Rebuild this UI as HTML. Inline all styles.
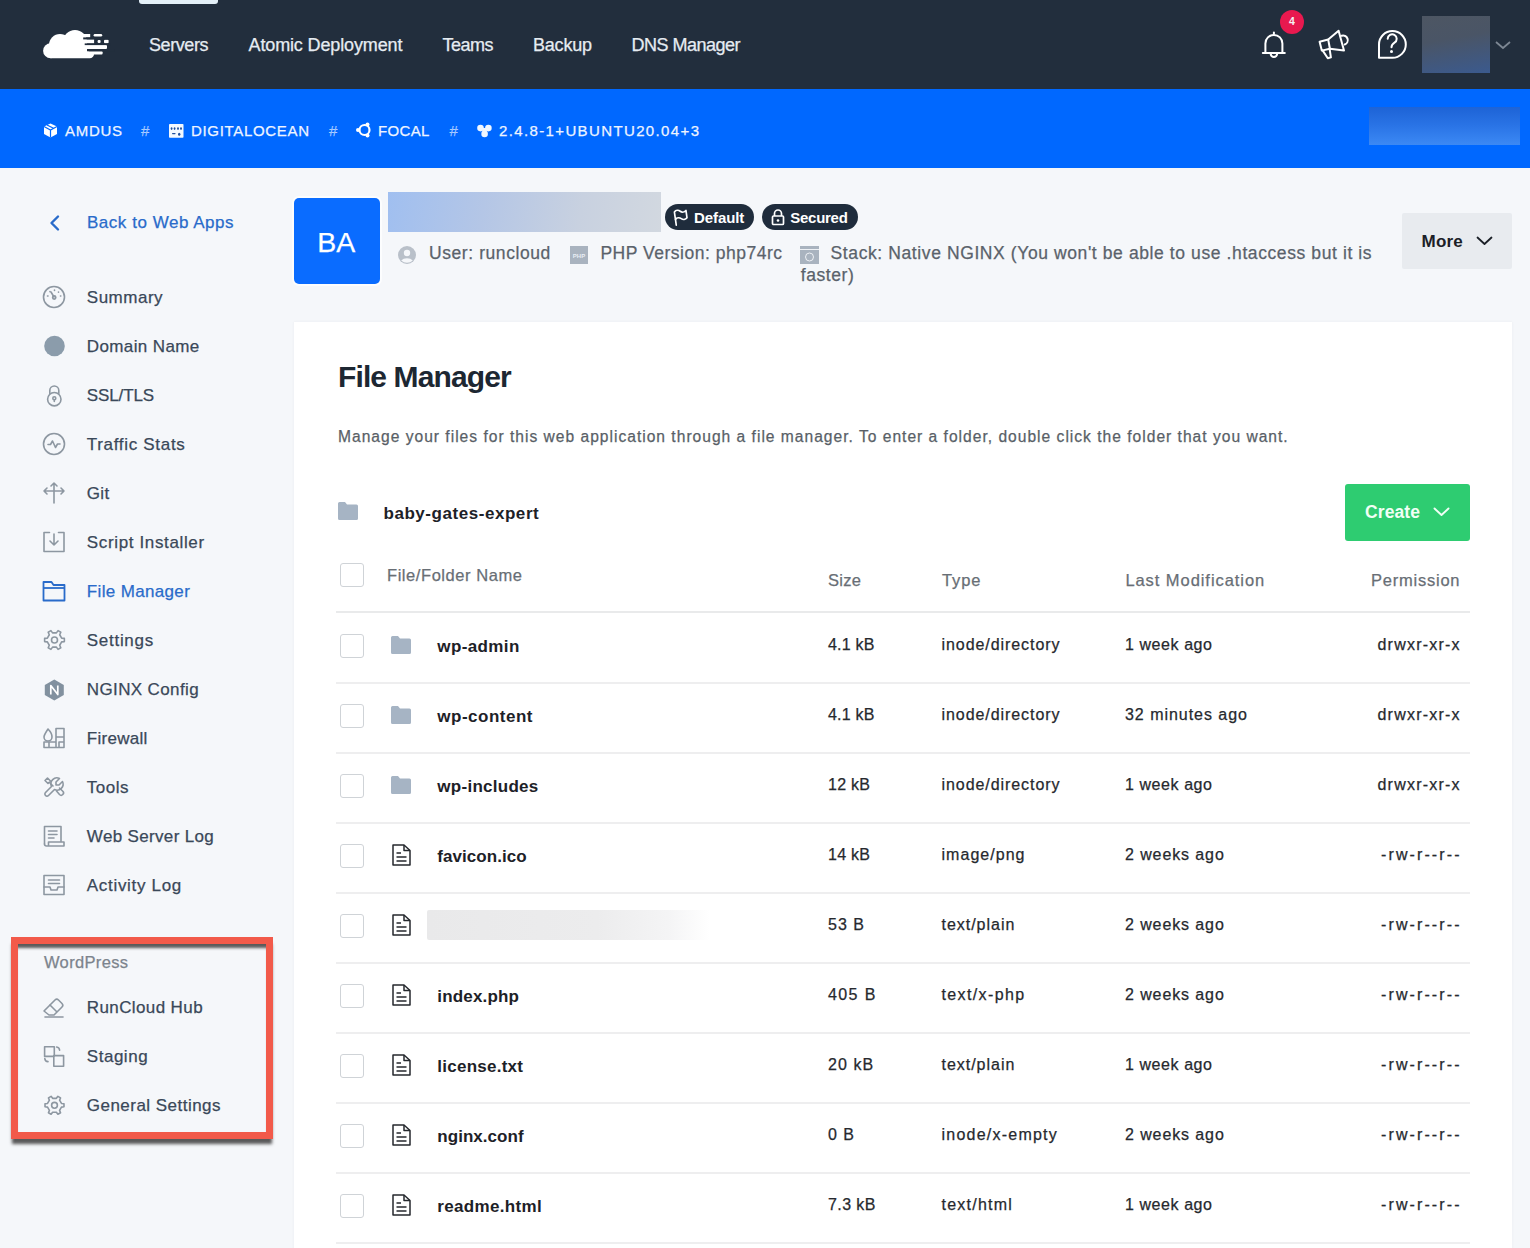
<!DOCTYPE html>
<html><head><meta charset="utf-8"><style>
html,body{margin:0;padding:0;}
body{width:1530px;height:1248px;position:relative;overflow:hidden;background:#f5f7fa;font-family:"Liberation Sans",sans-serif;}
.t{position:absolute;white-space:nowrap;line-height:1;-webkit-text-stroke:0.25px currentColor;}
svg{overflow:visible}
</style></head><body>
<div style="position:absolute;left:0px;top:0px;width:1530px;height:89px;background:#222e3d"></div>
<div style="position:absolute;left:139px;top:-4px;width:79px;height:8px;background:#e4f0f8;border-radius:3px"></div>
<svg style="position:absolute;left:43px;top:29px;" width="66" height="31" viewBox="0 0 66 31">
<g fill="#fff">
<circle cx="7.6" cy="21.8" r="7.5"/>
<circle cx="17" cy="16" r="11"/>
<circle cx="32" cy="13" r="12"/>
<path d="M7.6 14 H44 V25 H51 a4.3 4.3 0 0 1 -4.3 4.3 H7.6 Z"/>
<rect x="38" y="5" width="9.2" height="3.4"/>
<rect x="50.6" y="4.9" width="8.6" height="2.6" rx="1.3"/>
<rect x="38" y="10.4" width="13.1" height="4"/>
<rect x="54.6" y="11" width="3" height="3" rx="1"/>
<rect x="61" y="10.8" width="4.6" height="3.4" rx="1"/>
<rect x="38" y="16.1" width="26" height="3.9" rx="1"/>
<rect x="38" y="22.3" width="21.6" height="3.2" rx="1"/>
</g>
<g fill="#222e3d">
<rect x="40.2" y="8.4" width="26" height="2"/>
<rect x="41.7" y="14.4" width="26" height="1.7"/>
<rect x="45.7" y="20" width="26" height="2.3"/>
</g>
</svg>
<div class="t" style="left:149.00px;top:35.76px;font-size:18px;color:#e6ecf2;font-weight:normal;letter-spacing:-0.418px;">Servers</div>
<div class="t" style="left:248.50px;top:35.76px;font-size:18px;color:#e6ecf2;font-weight:normal;letter-spacing:-0.129px;">Atomic Deployment</div>
<div class="t" style="left:442.50px;top:35.76px;font-size:18px;color:#e6ecf2;font-weight:normal;letter-spacing:-0.502px;">Teams</div>
<div class="t" style="left:533.00px;top:35.76px;font-size:18px;color:#e6ecf2;font-weight:normal;letter-spacing:-0.206px;">Backup</div>
<div class="t" style="left:631.50px;top:35.76px;font-size:18px;color:#e6ecf2;font-weight:normal;letter-spacing:-0.505px;">DNS Manager</div>
<svg style="position:absolute;left:1260px;top:30px;" width="28" height="31" viewBox="0 0 28 31"><g fill="none" stroke="#fff" stroke-width="2" stroke-linecap="round" stroke-linejoin="round"><path d="M13.9 2.6 v1.2"/><path d="M5.4 22.6 V13.4 a8.5 8.5 0 0 1 17 0 V22.6"/><path d="M2.8 22.9 H24.8"/><path d="M10.6 23.6 a3.3 3.3 0 0 0 6.6 0"/></g></svg>
<div style="position:absolute;left:1280px;top:10px;width:24px;height:24px;background:#e8194f;border-radius:50%"></div>
<div class="t" style="left:1289.00px;top:15.71px;font-size:10.5px;color:#f4f4f4;font-weight:bold;letter-spacing:0.000px;-webkit-text-stroke:0;">4</div>
<svg style="position:absolute;left:1316px;top:28px;" width="34" height="34" viewBox="0 0 34 34"><g fill="none" stroke="#fff" stroke-width="2" stroke-linejoin="round" stroke-linecap="round"><path d="M3.6 13.8 L12.2 11.5 L22.6 2.7 L28 22.6 L13.9 20.7 L5.8 22.6 Z"/><path d="M12.2 11.5 L13.9 20.7"/><path d="M6.6 22.4 L11.8 30.3 L14.9 29.3 L13.6 20.8"/><path d="M25.6 7.8 A4.6 4.6 0 0 1 28.7 16.5"/></g></svg>
<svg style="position:absolute;left:1376px;top:28px;" width="33" height="33" viewBox="0 0 33 33"><g fill="none" stroke="#fff" stroke-width="2" stroke-linejoin="round" stroke-linecap="round"><path d="M3 29.8 V16.4 A13.4 13.4 0 1 1 16.4 29.8 Z"/><path d="M11.7 10.8 a4.5 4.5 0 1 1 6.8 3.9 c-1.6 1 -3 1.9 -3 4.6"/></g><circle cx="15.5" cy="23.6" r="1.5" fill="#fff"/></svg>
<div style="position:absolute;left:1422px;top:16px;width:68px;height:57px;background:linear-gradient(170deg,#4d5663 0%,#4a5566 40%,#3b5a8e 100%)"></div>
<svg style="position:absolute;left:1494px;top:39px;" width="18" height="12" viewBox="0 0 18 12"><path d="M2 3 L9 9 L16 3" fill="none" stroke="#7d8793" stroke-width="1.8"/></svg>
<div style="position:absolute;left:0px;top:89px;width:1530px;height:79px;background:#0068ff"></div>
<div class="t" style="left:65.00px;top:122.50px;font-size:15px;color:#eef4ff;font-weight:normal;letter-spacing:0.709px;">AMDUS</div>
<div class="t" style="left:141.00px;top:122.50px;font-size:15px;color:rgba(255,255,255,0.55);font-weight:normal;letter-spacing:0.000px;">#</div>
<div class="t" style="left:191.00px;top:122.50px;font-size:15px;color:#eef4ff;font-weight:normal;letter-spacing:0.675px;">DIGITALOCEAN</div>
<div class="t" style="left:329.00px;top:122.50px;font-size:15px;color:rgba(255,255,255,0.55);font-weight:normal;letter-spacing:0.000px;">#</div>
<div class="t" style="left:378.00px;top:122.50px;font-size:15px;color:#eef4ff;font-weight:normal;letter-spacing:0.322px;">FOCAL</div>
<div class="t" style="left:449.40px;top:122.50px;font-size:15px;color:rgba(255,255,255,0.55);font-weight:normal;letter-spacing:0.000px;">#</div>
<div class="t" style="left:499.00px;top:122.50px;font-size:15px;color:#eef4ff;font-weight:normal;letter-spacing:1.370px;">2.4.8-1+UBUNTU20.04+3</div>
<svg style="position:absolute;left:43px;top:123px;" width="15" height="15" viewBox="0 0 15 15"><path fill="#fff" d="M7.5 0.5 L14 3.5 L14 11 L7.5 14.5 L1 11 L1 3.5 Z"/><path fill="none" stroke="#0068ff" stroke-width="1.2" d="M1 3.5 L7.5 7 L14 3.5 M7.5 7 V14.5 M4 2 L10.5 5.3"/></svg>
<svg style="position:absolute;left:169px;top:124px;" width="15" height="14" viewBox="0 0 15 14"><rect x="0" y="0" width="14.5" height="13.7" rx="0.8" fill="#f2f8ff"/><g fill="#1f4f9e"><ellipse cx="2.6" cy="4.6" rx="0.9" ry="1.3"/><ellipse cx="5.6" cy="4.6" rx="0.9" ry="1.3"/><ellipse cx="9" cy="4.6" rx="0.9" ry="1.3"/><ellipse cx="12" cy="4.6" rx="0.9" ry="1.3"/><rect x="3" y="9" width="3.6" height="1.2" rx="0.6"/><ellipse cx="10.2" cy="10.3" rx="1.2" ry="1.5"/></g></svg>
<svg style="position:absolute;left:356px;top:122px;" width="16" height="16" viewBox="0 0 16 16"><circle cx="8.5" cy="8" r="5" fill="none" stroke="#fff" stroke-width="2.2"/><circle cx="2" cy="8" r="2" fill="#fff"/><circle cx="11.5" cy="2.5" r="2" fill="#fff"/><circle cx="11.5" cy="13.5" r="2" fill="#fff"/></svg>
<svg style="position:absolute;left:476px;top:122px;" width="16" height="16" viewBox="0 0 16 16"><circle cx="4.5" cy="6.1" r="3.3" fill="#f2f8ff"/><circle cx="12.4" cy="6.1" r="3.3" fill="#f2f8ff"/><circle cx="8.6" cy="11.9" r="3.3" fill="#f2f8ff"/><path d="M4.5 6.1 L12.4 6.1 L8.6 11.9 Z" fill="#f2f8ff"/></svg>
<div style="position:absolute;left:1369px;top:107px;width:151px;height:38px;background:linear-gradient(180deg,#1d63d6 0%,#2a74e6 50%,#3c89f4 100%)"></div>
<svg style="position:absolute;left:48px;top:214px;" width="14" height="18" viewBox="0 0 14 18"><path d="M10 2.5 L3.5 9 L10 15.5" fill="none" stroke="#296bca" stroke-width="2.4" stroke-linecap="round" stroke-linejoin="round"/></svg>
<div class="t" style="left:87.00px;top:213.61px;font-size:17px;color:#296bca;font-weight:normal;letter-spacing:0.527px;">Back to Web Apps</div>
<div class="t" style="left:86.80px;top:288.81px;font-size:17px;color:#3a4859;font-weight:normal;letter-spacing:0.512px;">Summary</div>
<div class="t" style="left:86.80px;top:337.81px;font-size:17px;color:#3a4859;font-weight:normal;letter-spacing:0.385px;">Domain Name</div>
<div class="t" style="left:86.80px;top:386.81px;font-size:17px;color:#3a4859;font-weight:normal;letter-spacing:-0.122px;">SSL/TLS</div>
<div class="t" style="left:86.80px;top:435.81px;font-size:17px;color:#3a4859;font-weight:normal;letter-spacing:0.688px;">Traffic Stats</div>
<div class="t" style="left:86.80px;top:484.81px;font-size:17px;color:#3a4859;font-weight:normal;letter-spacing:0.337px;">Git</div>
<div class="t" style="left:86.80px;top:533.81px;font-size:17px;color:#3a4859;font-weight:normal;letter-spacing:0.640px;">Script Installer</div>
<div class="t" style="left:86.80px;top:582.81px;font-size:17px;color:#296bca;font-weight:normal;letter-spacing:0.344px;">File Manager</div>
<div class="t" style="left:86.80px;top:631.81px;font-size:17px;color:#3a4859;font-weight:normal;letter-spacing:0.711px;">Settings</div>
<div class="t" style="left:86.80px;top:680.81px;font-size:17px;color:#3a4859;font-weight:normal;letter-spacing:0.373px;">NGINX Config</div>
<div class="t" style="left:86.80px;top:729.81px;font-size:17px;color:#3a4859;font-weight:normal;letter-spacing:0.291px;">Firewall</div>
<div class="t" style="left:86.80px;top:778.81px;font-size:17px;color:#3a4859;font-weight:normal;letter-spacing:0.480px;">Tools</div>
<div class="t" style="left:86.80px;top:827.81px;font-size:17px;color:#3a4859;font-weight:normal;letter-spacing:0.343px;">Web Server Log</div>
<div class="t" style="left:86.80px;top:876.81px;font-size:17px;color:#3a4859;font-weight:normal;letter-spacing:0.689px;">Activity Log</div>
<svg style="position:absolute;left:42px;top:285px;" width="24" height="24" viewBox="0 0 24 24"><g fill="none" stroke="#8d97a1" stroke-width="1.6" stroke-linecap="round" stroke-linejoin="round"><circle cx="12" cy="12" r="10.5"/><path d="M12 12 L9 7"/><circle cx="12.2" cy="12.5" r="1.6"/><path d="M5.5 11 h.5 M8 6.5 v.3 M12.5 5 v.5 M16.5 7 v.3 M18.5 11 h.3"/></g></svg>
<svg style="position:absolute;left:42px;top:334px;" width="24" height="24" viewBox="0 0 24 24"><circle cx="12.5" cy="12" r="10.3" fill="#8b9cab"/></svg>
<svg style="position:absolute;left:42px;top:383px;" width="24" height="24" viewBox="0 0 24 24"><g fill="none" stroke="#8d97a1" stroke-width="1.6" stroke-linecap="round" stroke-linejoin="round"><path d="M7.8 10.5 V7.5 a4.5 4.5 0 0 1 9 0 V10.5"/><circle cx="12.3" cy="16.2" r="6.7"/><circle cx="12.3" cy="15.2" r="1.5"/><path d="M12.3 16.7 v1.8"/></g></svg>
<svg style="position:absolute;left:42px;top:432px;" width="24" height="24" viewBox="0 0 24 24"><g fill="none" stroke="#8d97a1" stroke-width="1.6" stroke-linecap="round" stroke-linejoin="round"><circle cx="12" cy="12" r="10.5"/><path d="M6 12.5 H8.5 L10.5 9 L13.5 15.5 L15.5 12 H18"/></g></svg>
<svg style="position:absolute;left:42px;top:481px;" width="24" height="24" viewBox="0 0 24 24"><g fill="none" stroke="#8d97a1" stroke-width="1.6" stroke-linecap="round" stroke-linejoin="round"><path d="M12 22 V2 M9 5 L12 2 L15 5"/><path d="M2 10 H22 M5 7 L2 10 L5 13 M19 7 L22 10 L19 13"/></g></svg>
<svg style="position:absolute;left:42px;top:530px;" width="24" height="24" viewBox="0 0 24 24"><g fill="none" stroke="#8d97a1" stroke-width="1.6" stroke-linecap="round" stroke-linejoin="round"><path d="M7.5 2.5 H2 V21.5 H22 V2.5 H16.5"/><path d="M12 4 V15 M8 11 L12 15 L16 11"/></g></svg>
<svg style="position:absolute;left:42px;top:579px;" width="24" height="24" viewBox="0 0 24 24"><g fill="none" stroke="#296bca" stroke-width="1.8" stroke-linejoin="round"><path d="M1.5 3 H9.5 L11.5 6 H22.5 V21.5 H1.5 Z"/><path d="M1.5 9 H22.5"/></g></svg>
<svg style="position:absolute;left:42px;top:628px;" width="24" height="24" viewBox="0 0 24 24"><g fill="none" stroke="#8d97a1" stroke-width="1.6" stroke-linecap="round" stroke-linejoin="round"><path d="M19.65 10.10 L22.37 10.41 L22.37 13.59 L19.65 13.90 L17.72 17.24 L18.82 19.75 L16.06 21.35 L14.43 19.14 L10.57 19.14 L8.94 21.35 L6.18 19.75 L7.28 17.24 L5.35 13.90 L2.63 13.59 L2.63 10.41 L5.35 10.10 L7.28 6.76 L6.18 4.25 L8.94 2.65 L10.57 4.86 L14.43 4.86 L16.06 2.65 L18.82 4.25 L17.72 6.76 Z"/><circle cx="12.5" cy="12" r="3"/></g></svg>
<svg style="position:absolute;left:42px;top:677px;" width="24" height="24" viewBox="0 0 24 24"><g transform="translate(0.3,1)"><path fill="#82919f" d="M12 1.5 L21.5 7 V17 L12 22.5 L2.5 17 V7 Z"/><path d="M8.5 16.5 V7.5 L15.5 16.5 V7.5" fill="none" stroke="#fff" stroke-width="1.7" stroke-linejoin="round"/></g></svg>
<svg style="position:absolute;left:42px;top:726px;" width="24" height="24" viewBox="0 0 24 24"><g fill="none" stroke="#8d97a1" stroke-width="1.6" stroke-linecap="round" stroke-linejoin="round"><path d="M2 21.5 H22 V2.5 H14 M22 11 H14 M22 16 H17 V21.5 M14 2.5 V21.5 M2 16 V21.5 M7 16 V21.5 M2 16 H14"/><path d="M6 3 C9 6 10 9 10 11 a4 4 0 0 1 -8 0 C2 9 4 6 6 3 Z"/></g></svg>
<svg style="position:absolute;left:42px;top:775px;" width="24" height="24" viewBox="0 0 24 24"><g fill="none" stroke="#8d97a1" stroke-width="1.6" stroke-linecap="round" stroke-linejoin="round"><path d="M17 10 h-3 v-3 l3.5 -3.5 a6 6 0 0 0 -8 8 l-6 6 a2 2 0 0 0 3 3 l6 -6 a6 6 0 0 0 8 -8 l-3.5 3.5" transform="translate(24,0) scale(-1,1) translate(24,0) scale(-1,1)"/><path d="M3 5.5 L5.5 3 L8.5 6 L6 8.5 Z"/><path d="M7.5 7.5 L11 11"/><path d="M14.5 16 L17.5 19.5 a2.3 2.3 0 0 0 3.3 -3.3 L17.5 13"/></g></svg>
<svg style="position:absolute;left:42px;top:824px;" width="24" height="24" viewBox="0 0 24 24"><g fill="none" stroke="#8d97a1" stroke-width="1.6" stroke-linecap="round" stroke-linejoin="round"><path d="M2.5 20 V2.5 H19 V17.5"/><path d="M6.5 7 H15 M6.5 10.5 H15 M6.5 14 H12"/><path d="M2.5 20 a2 2 0 0 0 2 2 H22 V18 H6.5 V21"/></g></svg>
<svg style="position:absolute;left:42px;top:873px;" width="24" height="24" viewBox="0 0 24 24"><g fill="none" stroke="#8d97a1" stroke-width="1.6" stroke-linecap="round" stroke-linejoin="round"><rect x="2" y="2.5" width="20" height="19"/><path d="M6.5 7 H17.5 M6.5 10.5 H17.5 M2 14 H8 L9 17 H15 L16 14 H22"/></g></svg>
<div class="t" style="left:44.00px;top:953.83px;font-size:16.5px;color:#7c848d;font-weight:normal;letter-spacing:0.338px;">WordPress</div>
<div class="t" style="left:86.80px;top:998.61px;font-size:17px;color:#3a4859;font-weight:normal;letter-spacing:0.389px;">RunCloud Hub</div>
<div class="t" style="left:86.80px;top:1047.61px;font-size:17px;color:#3a4859;font-weight:normal;letter-spacing:0.523px;">Staging</div>
<div class="t" style="left:86.80px;top:1096.61px;font-size:17px;color:#3a4859;font-weight:normal;letter-spacing:0.471px;">General Settings</div>
<svg style="position:absolute;left:42px;top:995px;" width="24" height="24" viewBox="0 0 24 24"><g fill="none" stroke="#8d97a1" stroke-width="1.6" stroke-linecap="round" stroke-linejoin="round"><path d="M2 16 L13 5 a2.5 2.5 0 0 1 3.5 0 L20 8.5 a2.5 2.5 0 0 1 0 3.5 L12 20 H7 Z"/><path d="M8 10 L14.5 16.5"/><path d="M3 22 H21"/></g></svg>
<svg style="position:absolute;left:42px;top:1044px;" width="24" height="24" viewBox="0 0 24 24"><g fill="none" stroke="#8d97a1" stroke-width="1.6" stroke-linecap="round" stroke-linejoin="round"><path d="M11.8 12.4 H2.6 V2.8 H12.3 V11.6"/><path d="M14.6 3 a3.4 3.4 0 0 1 3 3.2"/><path d="M2.8 14.6 a3.4 3.4 0 0 0 3.2 3"/><rect x="11.8" y="11.6" width="9.8" height="10.6"/></g></svg>
<svg style="position:absolute;left:42px;top:1093px;" width="24" height="24" viewBox="0 0 24 24"><g fill="none" stroke="#8d97a1" stroke-width="1.6" stroke-linecap="round" stroke-linejoin="round"><path d="M19.46 10.45 L21.98 10.77 L21.98 13.83 L19.46 14.15 L17.58 17.40 L18.56 19.74 L15.91 21.27 L14.38 19.25 L10.62 19.25 L9.09 21.27 L6.44 19.74 L7.42 17.40 L5.54 14.15 L3.02 13.83 L3.02 10.77 L5.54 10.45 L7.42 7.20 L6.44 4.86 L9.09 3.33 L10.62 5.35 L14.38 5.35 L15.91 3.33 L18.56 4.86 L17.58 7.20 Z"/><circle cx="12.5" cy="12.3" r="2.9"/></g></svg>
<div style="position:absolute;left:11px;top:937px;width:248px;height:188px;border:7px solid #f25a4a;box-shadow:0 6px 3px -1px rgba(50,50,50,0.8), inset 0 6px 3px -2px rgba(50,50,50,0.8);"></div>
<div style="position:absolute;left:292px;top:196px;width:90px;height:90px;background:#fff;border-radius:7px;opacity:.7"></div>
<div style="position:absolute;left:294px;top:198px;width:86px;height:86px;background:#0a6cff;border-radius:5px"></div>
<div class="t" style="left:317.30px;top:228.37px;font-size:28.5px;color:#fff;font-weight:normal;letter-spacing:0.000px;">BA</div>
<div style="position:absolute;left:388px;top:192px;width:273px;height:40px;background:linear-gradient(100deg,#a0bff0 0%,#b4c6e6 35%,#c8d1e0 70%,#d2d8e0 100%)"></div>
<div style="position:absolute;left:665px;top:204px;width:89px;height:26px;background:#1f2c3c;border-radius:13px"></div>
<div style="position:absolute;left:762px;top:204px;width:96px;height:26px;background:#1f2c3c;border-radius:13px"></div>
<svg style="position:absolute;left:671px;top:207px;" width="20" height="20" viewBox="0 0 24 24"><g fill="none" stroke="#fff" stroke-width="2" stroke-linecap="round" stroke-linejoin="round" transform="rotate(-8 12 12)"><path d="M5 5a5 5 0 0 1 7 0a5 5 0 0 0 7 0v9a5 5 0 0 1 -7 0a5 5 0 0 0 -7 0v-9z"/><path d="M5 21v-7"/></g></svg>
<div class="t" style="left:694.00px;top:209.80px;font-size:15px;color:#fff;font-weight:bold;letter-spacing:-0.089px;-webkit-text-stroke:0;">Default</div>
<svg style="position:absolute;left:771px;top:208px;" width="14" height="18" viewBox="0 0 14 18"><g fill="none" stroke="#fff" stroke-width="1.7"><path d="M3.5 8 V5.5 a3.5 3.5 0 0 1 7 0 V8"/><rect x="1.5" y="8" width="11" height="8.5" rx="1"/></g><circle cx="7" cy="12.5" r="1.3" fill="#fff"/></svg>
<div class="t" style="left:790.30px;top:209.80px;font-size:15px;color:#fff;font-weight:bold;letter-spacing:-0.282px;-webkit-text-stroke:0;">Secured</div>
<svg style="position:absolute;left:398px;top:246px;" width="18" height="18" viewBox="0 0 18 18"><circle cx="9" cy="9" r="9" fill="#b9c0c9"/><circle cx="9" cy="7" r="3.2" fill="#f5f7fa"/><path d="M3.2 14.5 a7 5 0 0 1 11.6 0 a8.5 8.5 0 0 1 -11.6 0 Z" fill="#f5f7fa"/></svg>
<div class="t" style="left:429.00px;top:245.18px;font-size:17.5px;color:#5a626b;font-weight:normal;letter-spacing:0.577px;">User: runcloud</div>
<svg style="position:absolute;left:570px;top:246px;" width="18" height="18" viewBox="0 0 18 18"><rect x="0" y="0" width="18" height="18" fill="#a9b3bf"/><text x="9" y="12" font-size="6" fill="#e8eef5" text-anchor="middle" font-family="Liberation Sans" font-weight="bold">PHP</text></svg>
<div class="t" style="left:600.40px;top:245.18px;font-size:17.5px;color:#5a626b;font-weight:normal;letter-spacing:0.512px;">PHP Version: php74rc</div>
<svg style="position:absolute;left:800px;top:246px;" width="19" height="18" viewBox="0 0 19 18"><rect x="0" y="0" width="19" height="18" fill="#a9b3bf"/><rect x="0" y="3" width="19" height="1" fill="#eef1f5"/><circle cx="9.5" cy="11" r="4" fill="none" stroke="#eef1f5" stroke-width="1"/></svg>
<div class="t" style="left:830.60px;top:244.98px;font-size:17.5px;color:#5a626b;font-weight:normal;letter-spacing:0.599px;">Stack: Native NGINX (You won&#x27;t be able to use .htaccess but it is</div>
<div class="t" style="left:800.80px;top:266.98px;font-size:17.5px;color:#5a626b;font-weight:normal;letter-spacing:0.567px;">faster)</div>
<div style="position:absolute;left:1402px;top:213px;width:110px;height:56px;background:#e8ebef;border-radius:2px"></div>
<div class="t" style="left:1421.50px;top:232.61px;font-size:17px;color:#1b2027;font-weight:bold;letter-spacing:0.229px;-webkit-text-stroke:0;">More</div>
<svg style="position:absolute;left:1475px;top:235px;" width="19" height="12" viewBox="0 0 19 12"><path d="M2.5 2.5 L9.5 9 L16.5 2.5" fill="none" stroke="#1b2027" stroke-width="1.8" stroke-linecap="round" stroke-linejoin="round"/></svg>
<div style="position:absolute;left:294px;top:322px;width:1218px;height:930px;background:#fff;box-shadow:0 0 3px rgba(30,40,60,0.05)"></div>
<div class="t" style="left:338.00px;top:362.20px;font-size:30px;color:#1d2732;font-weight:bold;letter-spacing:-0.881px;-webkit-text-stroke:0;">File Manager</div>
<div class="t" style="left:338.00px;top:428.69px;font-size:15.6px;color:#595f67;font-weight:normal;letter-spacing:1.000px;">Manage your files for this web application through a file manager. To enter a folder, double click the folder that you want.</div>
<svg style="position:absolute;left:338px;top:502px;" width="20" height="18" viewBox="0 0 20 18"><path fill="#a6b4c4" d="M0 1.5 a1.5 1.5 0 0 1 1.5 -1.5 H7 L9 2.5 H18.5 a1.5 1.5 0 0 1 1.5 1.5 V16.5 a1.5 1.5 0 0 1 -1.5 1.5 H1.5 A1.5 1.5 0 0 1 0 16.5 Z"/></svg>
<div class="t" style="left:383.50px;top:504.61px;font-size:17px;color:#1d2127;font-weight:bold;letter-spacing:0.548px;-webkit-text-stroke:0;">baby-gates-expert</div>
<div style="position:absolute;left:1345px;top:484px;width:125px;height:57px;background:#2ecc71;border-radius:3px"></div>
<div class="t" style="left:1365.00px;top:504.18px;font-size:17.5px;color:#f0fff5;font-weight:bold;letter-spacing:0.104px;-webkit-text-stroke:0;">Create</div>
<svg style="position:absolute;left:1432px;top:505px;" width="19" height="14" viewBox="0 0 19 14"><path d="M2.5 3.5 L9.5 10 L16.5 3.5" fill="none" stroke="#f0fff5" stroke-width="1.9" stroke-linecap="round" stroke-linejoin="round"/></svg>
<div style="position:absolute;left:340px;top:563px;width:22px;height:22px;border:1px solid #cfd3d7;border-radius:3px;background:#fff"></div>
<div class="t" style="left:387.00px;top:566.53px;font-size:16.5px;color:#686e75;font-weight:normal;letter-spacing:0.564px;">File/Folder Name</div>
<div class="t" style="left:828.00px;top:572.03px;font-size:16.5px;color:#686e75;font-weight:normal;letter-spacing:0.302px;">Size</div>
<div class="t" style="left:942.00px;top:572.03px;font-size:16.5px;color:#686e75;font-weight:normal;letter-spacing:0.909px;">Type</div>
<div class="t" style="left:1125.40px;top:572.03px;font-size:16.5px;color:#686e75;font-weight:normal;letter-spacing:0.937px;">Last Modification</div>
<div class="t" style="left:1371.10px;top:572.03px;font-size:16.5px;color:#686e75;font-weight:normal;letter-spacing:0.755px;">Permission</div>
<div style="position:absolute;left:336px;top:611px;width:1134px;height:2px;background:#e9eaeb"></div>
<div style="position:absolute;left:340px;top:634px;width:22px;height:22px;border:1px solid #cfd3d7;border-radius:3px;background:#fff"></div>
<svg style="position:absolute;left:391px;top:636px;" width="20" height="18" viewBox="0 0 20 18"><path fill="#a6b4c4" d="M0 1.5 a1.5 1.5 0 0 1 1.5 -1.5 H7 L9 2.5 H18.5 a1.5 1.5 0 0 1 1.5 1.5 V16.5 a1.5 1.5 0 0 1 -1.5 1.5 H1.5 A1.5 1.5 0 0 1 0 16.5 Z"/></svg>
<div class="t" style="left:437.35px;top:637.61px;font-size:17px;color:#1d2127;font-weight:bold;letter-spacing:0.373px;-webkit-text-stroke:0;">wp-admin</div>
<div class="t" style="left:828.00px;top:636.95px;font-size:16px;color:#26292e;font-weight:normal;letter-spacing:0.188px;">4.1 kB</div>
<div class="t" style="left:941.50px;top:636.95px;font-size:16px;color:#26292e;font-weight:normal;letter-spacing:0.933px;">inode/directory</div>
<div class="t" style="left:1125.00px;top:636.95px;font-size:16px;color:#26292e;font-weight:normal;letter-spacing:0.573px;">1 week ago</div>
<div class="t" style="left:1377.50px;top:636.95px;font-size:16px;color:#26292e;font-weight:normal;letter-spacing:1.212px;">drwxr-xr-x</div>
<div style="position:absolute;left:336px;top:682px;width:1134px;height:2px;background:#eeeeef"></div>
<div style="position:absolute;left:340px;top:704px;width:22px;height:22px;border:1px solid #cfd3d7;border-radius:3px;background:#fff"></div>
<svg style="position:absolute;left:391px;top:706px;" width="20" height="18" viewBox="0 0 20 18"><path fill="#a6b4c4" d="M0 1.5 a1.5 1.5 0 0 1 1.5 -1.5 H7 L9 2.5 H18.5 a1.5 1.5 0 0 1 1.5 1.5 V16.5 a1.5 1.5 0 0 1 -1.5 1.5 H1.5 A1.5 1.5 0 0 1 0 16.5 Z"/></svg>
<div class="t" style="left:437.35px;top:707.61px;font-size:17px;color:#1d2127;font-weight:bold;letter-spacing:0.499px;-webkit-text-stroke:0;">wp-content</div>
<div class="t" style="left:828.00px;top:706.95px;font-size:16px;color:#26292e;font-weight:normal;letter-spacing:0.188px;">4.1 kB</div>
<div class="t" style="left:941.50px;top:706.95px;font-size:16px;color:#26292e;font-weight:normal;letter-spacing:0.933px;">inode/directory</div>
<div class="t" style="left:1125.00px;top:706.95px;font-size:16px;color:#26292e;font-weight:normal;letter-spacing:0.969px;">32 minutes ago</div>
<div class="t" style="left:1377.50px;top:706.95px;font-size:16px;color:#26292e;font-weight:normal;letter-spacing:1.212px;">drwxr-xr-x</div>
<div style="position:absolute;left:336px;top:752px;width:1134px;height:2px;background:#eeeeef"></div>
<div style="position:absolute;left:340px;top:774px;width:22px;height:22px;border:1px solid #cfd3d7;border-radius:3px;background:#fff"></div>
<svg style="position:absolute;left:391px;top:776px;" width="20" height="18" viewBox="0 0 20 18"><path fill="#a6b4c4" d="M0 1.5 a1.5 1.5 0 0 1 1.5 -1.5 H7 L9 2.5 H18.5 a1.5 1.5 0 0 1 1.5 1.5 V16.5 a1.5 1.5 0 0 1 -1.5 1.5 H1.5 A1.5 1.5 0 0 1 0 16.5 Z"/></svg>
<div class="t" style="left:437.35px;top:777.61px;font-size:17px;color:#1d2127;font-weight:bold;letter-spacing:0.272px;-webkit-text-stroke:0;">wp-includes</div>
<div class="t" style="left:828.00px;top:776.95px;font-size:16px;color:#26292e;font-weight:normal;letter-spacing:0.272px;">12 kB</div>
<div class="t" style="left:941.50px;top:776.95px;font-size:16px;color:#26292e;font-weight:normal;letter-spacing:0.933px;">inode/directory</div>
<div class="t" style="left:1125.00px;top:776.95px;font-size:16px;color:#26292e;font-weight:normal;letter-spacing:0.573px;">1 week ago</div>
<div class="t" style="left:1377.50px;top:776.95px;font-size:16px;color:#26292e;font-weight:normal;letter-spacing:1.212px;">drwxr-xr-x</div>
<div style="position:absolute;left:336px;top:822px;width:1134px;height:2px;background:#eeeeef"></div>
<div style="position:absolute;left:340px;top:844px;width:22px;height:22px;border:1px solid #cfd3d7;border-radius:3px;background:#fff"></div>
<svg style="position:absolute;left:392px;top:844px;" width="19" height="22" viewBox="0 0 19 22"><g fill="none" stroke="#26292e" stroke-width="1.5" stroke-linejoin="round"><path d="M1 1 H12 L18 6.5 V21 H1 Z"/><path d="M12 1 V6.5 H18"/><path d="M4.5 9 H9 M4.5 13 H14.5 M4.5 17 H14.5"/></g></svg>
<div class="t" style="left:437.30px;top:847.61px;font-size:17px;color:#1d2127;font-weight:bold;letter-spacing:0.059px;-webkit-text-stroke:0;">favicon.ico</div>
<div class="t" style="left:828.00px;top:846.95px;font-size:16px;color:#26292e;font-weight:normal;letter-spacing:0.272px;">14 kB</div>
<div class="t" style="left:941.50px;top:846.95px;font-size:16px;color:#26292e;font-weight:normal;letter-spacing:1.035px;">image/png</div>
<div class="t" style="left:1125.00px;top:846.95px;font-size:16px;color:#26292e;font-weight:normal;letter-spacing:0.896px;">2 weeks ago</div>
<div class="t" style="left:1381.00px;top:846.95px;font-size:16px;color:#26292e;font-weight:normal;letter-spacing:2.111px;">-rw-r--r--</div>
<div style="position:absolute;left:336px;top:892px;width:1134px;height:2px;background:#eeeeef"></div>
<div style="position:absolute;left:340px;top:914px;width:22px;height:22px;border:1px solid #cfd3d7;border-radius:3px;background:#fff"></div>
<svg style="position:absolute;left:392px;top:914px;" width="19" height="22" viewBox="0 0 19 22"><g fill="none" stroke="#26292e" stroke-width="1.5" stroke-linejoin="round"><path d="M1 1 H12 L18 6.5 V21 H1 Z"/><path d="M12 1 V6.5 H18"/><path d="M4.5 9 H9 M4.5 13 H14.5 M4.5 17 H14.5"/></g></svg>
<div style="position:absolute;left:427px;top:910px;width:283px;height:30px;background:linear-gradient(90deg,#e9e9ea 0%,#ececed 60%,#f4f4f5 85%,#ffffff 100%);border-radius:2px"></div>
<div class="t" style="left:828.00px;top:916.95px;font-size:16px;color:#26292e;font-weight:normal;letter-spacing:1.029px;">53 B</div>
<div class="t" style="left:941.50px;top:916.95px;font-size:16px;color:#26292e;font-weight:normal;letter-spacing:0.974px;">text/plain</div>
<div class="t" style="left:1125.00px;top:916.95px;font-size:16px;color:#26292e;font-weight:normal;letter-spacing:0.896px;">2 weeks ago</div>
<div class="t" style="left:1381.00px;top:916.95px;font-size:16px;color:#26292e;font-weight:normal;letter-spacing:2.111px;">-rw-r--r--</div>
<div style="position:absolute;left:336px;top:962px;width:1134px;height:2px;background:#eeeeef"></div>
<div style="position:absolute;left:340px;top:984px;width:22px;height:22px;border:1px solid #cfd3d7;border-radius:3px;background:#fff"></div>
<svg style="position:absolute;left:392px;top:984px;" width="19" height="22" viewBox="0 0 19 22"><g fill="none" stroke="#26292e" stroke-width="1.5" stroke-linejoin="round"><path d="M1 1 H12 L18 6.5 V21 H1 Z"/><path d="M12 1 V6.5 H18"/><path d="M4.5 9 H9 M4.5 13 H14.5 M4.5 17 H14.5"/></g></svg>
<div class="t" style="left:437.30px;top:987.61px;font-size:17px;color:#1d2127;font-weight:bold;letter-spacing:0.178px;-webkit-text-stroke:0;">index.php</div>
<div class="t" style="left:828.00px;top:986.95px;font-size:16px;color:#26292e;font-weight:normal;letter-spacing:1.398px;">405 B</div>
<div class="t" style="left:941.50px;top:986.95px;font-size:16px;color:#26292e;font-weight:normal;letter-spacing:1.372px;">text/x-php</div>
<div class="t" style="left:1125.00px;top:986.95px;font-size:16px;color:#26292e;font-weight:normal;letter-spacing:0.896px;">2 weeks ago</div>
<div class="t" style="left:1381.00px;top:986.95px;font-size:16px;color:#26292e;font-weight:normal;letter-spacing:2.111px;">-rw-r--r--</div>
<div style="position:absolute;left:336px;top:1032px;width:1134px;height:2px;background:#eeeeef"></div>
<div style="position:absolute;left:340px;top:1054px;width:22px;height:22px;border:1px solid #cfd3d7;border-radius:3px;background:#fff"></div>
<svg style="position:absolute;left:392px;top:1054px;" width="19" height="22" viewBox="0 0 19 22"><g fill="none" stroke="#26292e" stroke-width="1.5" stroke-linejoin="round"><path d="M1 1 H12 L18 6.5 V21 H1 Z"/><path d="M12 1 V6.5 H18"/><path d="M4.5 9 H9 M4.5 13 H14.5 M4.5 17 H14.5"/></g></svg>
<div class="t" style="left:437.30px;top:1057.61px;font-size:17px;color:#1d2127;font-weight:bold;letter-spacing:0.255px;-webkit-text-stroke:0;">license.txt</div>
<div class="t" style="left:828.00px;top:1056.95px;font-size:16px;color:#26292e;font-weight:normal;letter-spacing:1.072px;">20 kB</div>
<div class="t" style="left:941.50px;top:1056.95px;font-size:16px;color:#26292e;font-weight:normal;letter-spacing:0.974px;">text/plain</div>
<div class="t" style="left:1125.00px;top:1056.95px;font-size:16px;color:#26292e;font-weight:normal;letter-spacing:0.573px;">1 week ago</div>
<div class="t" style="left:1381.00px;top:1056.95px;font-size:16px;color:#26292e;font-weight:normal;letter-spacing:2.111px;">-rw-r--r--</div>
<div style="position:absolute;left:336px;top:1102px;width:1134px;height:2px;background:#eeeeef"></div>
<div style="position:absolute;left:340px;top:1124px;width:22px;height:22px;border:1px solid #cfd3d7;border-radius:3px;background:#fff"></div>
<svg style="position:absolute;left:392px;top:1124px;" width="19" height="22" viewBox="0 0 19 22"><g fill="none" stroke="#26292e" stroke-width="1.5" stroke-linejoin="round"><path d="M1 1 H12 L18 6.5 V21 H1 Z"/><path d="M12 1 V6.5 H18"/><path d="M4.5 9 H9 M4.5 13 H14.5 M4.5 17 H14.5"/></g></svg>
<div class="t" style="left:437.30px;top:1127.61px;font-size:17px;color:#1d2127;font-weight:bold;letter-spacing:0.037px;-webkit-text-stroke:0;">nginx.conf</div>
<div class="t" style="left:828.00px;top:1126.95px;font-size:16px;color:#26292e;font-weight:normal;letter-spacing:0.992px;">0 B</div>
<div class="t" style="left:941.50px;top:1126.95px;font-size:16px;color:#26292e;font-weight:normal;letter-spacing:1.234px;">inode/x-empty</div>
<div class="t" style="left:1125.00px;top:1126.95px;font-size:16px;color:#26292e;font-weight:normal;letter-spacing:0.896px;">2 weeks ago</div>
<div class="t" style="left:1381.00px;top:1126.95px;font-size:16px;color:#26292e;font-weight:normal;letter-spacing:2.111px;">-rw-r--r--</div>
<div style="position:absolute;left:336px;top:1172px;width:1134px;height:2px;background:#eeeeef"></div>
<div style="position:absolute;left:340px;top:1194px;width:22px;height:22px;border:1px solid #cfd3d7;border-radius:3px;background:#fff"></div>
<svg style="position:absolute;left:392px;top:1194px;" width="19" height="22" viewBox="0 0 19 22"><g fill="none" stroke="#26292e" stroke-width="1.5" stroke-linejoin="round"><path d="M1 1 H12 L18 6.5 V21 H1 Z"/><path d="M12 1 V6.5 H18"/><path d="M4.5 9 H9 M4.5 13 H14.5 M4.5 17 H14.5"/></g></svg>
<div class="t" style="left:437.30px;top:1197.61px;font-size:17px;color:#1d2127;font-weight:bold;letter-spacing:0.322px;-webkit-text-stroke:0;">readme.html</div>
<div class="t" style="left:828.00px;top:1196.95px;font-size:16px;color:#26292e;font-weight:normal;letter-spacing:0.408px;">7.3 kB</div>
<div class="t" style="left:941.50px;top:1196.95px;font-size:16px;color:#26292e;font-weight:normal;letter-spacing:1.242px;">text/html</div>
<div class="t" style="left:1125.00px;top:1196.95px;font-size:16px;color:#26292e;font-weight:normal;letter-spacing:0.573px;">1 week ago</div>
<div class="t" style="left:1381.00px;top:1196.95px;font-size:16px;color:#26292e;font-weight:normal;letter-spacing:2.111px;">-rw-r--r--</div>
<div style="position:absolute;left:336px;top:1242px;width:1134px;height:2px;background:#eeeeef"></div>
</body></html>
